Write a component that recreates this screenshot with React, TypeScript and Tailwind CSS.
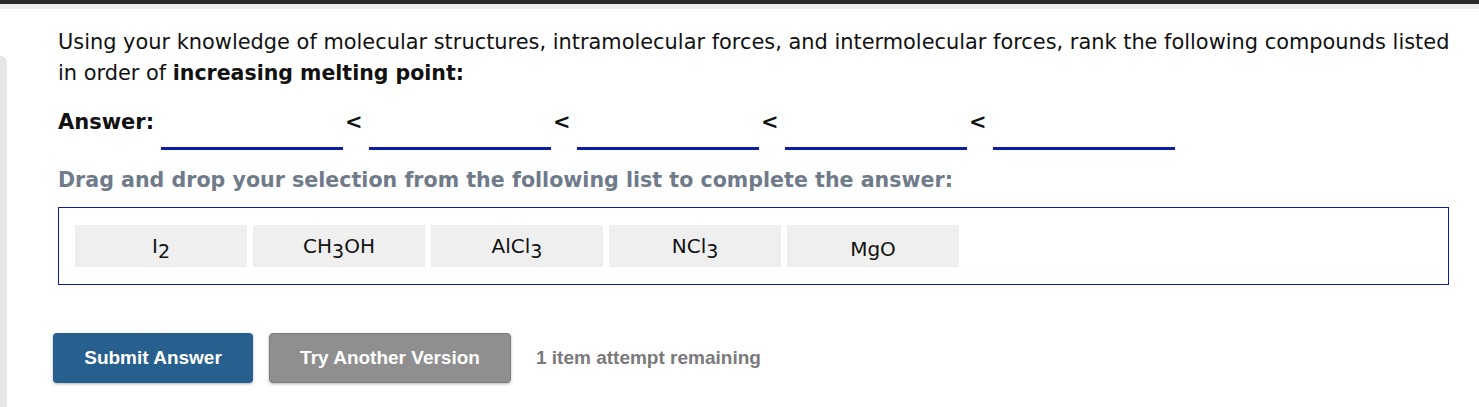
const compounds: { label: string; sub?: string; rest?: string }[] = [
  { label: "I", sub: "2" },
  { label: "CH", sub: "3", rest: "OH" },
  { label: "AlCl", sub: "3" },
  { label: "NCl", sub: "3" },
  { label: "MgO" },
];

function Blank({ last }: { last?: boolean }) {
  return (
    <div className="flex items-start">
      <div className="h-[41px] w-[182px] border-b-[3px] border-[#0a1ca8]" />
      {!last && <span className="w-[26px] pl-[2px] font-bold">&lt;</span>}
    </div>
  );
}

export default function App() {
  return (
    <div className="min-h-[407px] bg-white font-['DejaVu_Sans',Verdana,sans-serif] text-[20.9px] text-[#111]">
      <div className="h-[4px] bg-[#2a2a2a]" />
      <div className="h-[5px] bg-[#eeeeee]" />
      <div className="flex">
        <div className="mt-[47px] h-[351px] w-[7px] rounded-tr-[6px] bg-[#e6e6e6]" />
        <div className="flex-1 pl-[51px] pr-[20px] pt-[18px]">
          <p className="leading-[31px]">
            Using your knowledge of molecular structures, intramolecular forces, and intermolecular forces, rank the following compounds listed in order of{" "}
            <b className="text-[20.5px]">increasing melting point:</b>
          </p>

          <div className="mt-[20px] flex items-start text-[21px] leading-[26px]">
            <span className="w-[103px] font-bold">Answer:</span>
            <Blank />
            <Blank />
            <Blank />
            <Blank />
            <Blank last />
          </div>

          <p className="mt-[17px] text-[20.6px] font-bold leading-[26px] text-[#6f7a8a]">
            Drag and drop your selection from the following list to complete the answer:
          </p>

          <div className="mt-[14px] flex w-[1391px] gap-[6px] border border-[#0a1ca8] px-[16px] py-[17px]">
            {compounds.map((c) => (
              <div
                key={c.label + (c.rest ?? "")}
                className={`flex h-[42px] w-[172px] items-center justify-center bg-[#efefef] text-[20px] ${c.sub ? "" : "pt-[5px]"}`}
              >
                <span>
                  {c.label}
                  {c.sub && <sub className="text-[19px]">{c.sub}</sub>}
                  {c.rest}
                </span>
              </div>
            ))}
          </div>

          <div className="-ml-[5px] mt-[48px] flex items-center gap-[16px] font-['Liberation_Sans',Arial,sans-serif] text-[19px] font-bold">
            <button className="h-[50px] w-[200px] rounded-[4px] bg-[#27608f] text-white shadow-[0_1px_3px_rgba(0,0,0,0.3)]">
              Submit Answer
            </button>
            <button className="h-[50px] w-[242px] rounded-[4px] border border-[#7d7d7d] bg-[#8f8f8f] text-white shadow-[0_1px_3px_rgba(0,0,0,0.3)]">
              Try Another Version
            </button>
            <span className="ml-[9px] text-[#7a7a7a]">1 item attempt remaining</span>
          </div>
        </div>
      </div>
    </div>
  );
}
